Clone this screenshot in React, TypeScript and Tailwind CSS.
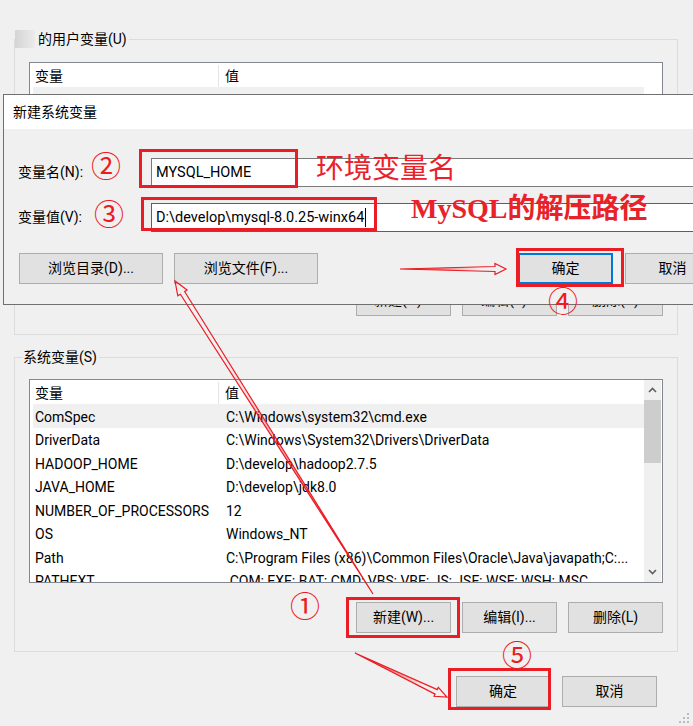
import type { ReactNode } from 'react';

const RED = '#ec1c24';

type Row = [string, string];

// user rows are hidden behind the dialog; only the selected row's edge shows
const userRows: Row[] = [['', '']];

const sysRows: Row[] = [
  ['ComSpec', 'C:\\Windows\\system32\\cmd.exe'],
  ['DriverData', 'C:\\Windows\\System32\\Drivers\\DriverData'],
  ['HADOOP_HOME', 'D:\\develop\\hadoop2.7.5'],
  ['JAVA_HOME', 'D:\\develop\\jdk8.0'],
  ['NUMBER_OF_PROCESSORS', '12'],
  ['OS', 'Windows_NT'],
  ['Path', 'C:\\Program Files (x86)\\Common Files\\Oracle\\Java\\javapath;C:...'],
  ['PATHEXT', '.COM;.EXE;.BAT;.CMD;.VBS;.VBE;.JS;.JSE;.WSF;.WSH;.MSC'],
];

// hollow tapered arrow, like the screenshot tool draws
type Arrow = { x1: number; y1: number; x2: number; y2: number; shaft: number; headW: number; headL: number };

const arrows: Arrow[] = [
  { x1: 373, y1: 594, x2: 175, y2: 281, shaft: 5, headW: 11, headL: 14 },
  { x1: 400, y1: 269, x2: 506, y2: 269, shaft: 5, headW: 11, headL: 11 },
  { x1: 355, y1: 653, x2: 447, y2: 697, shaft: 5, headW: 10, headL: 12 },
];

function arrowPath(a: Arrow) {
  const dx = a.x2 - a.x1;
  const dy = a.y2 - a.y1;
  const len = Math.hypot(dx, dy);
  const ux = dx / len;
  const uy = dy / len;
  const nx = -uy;
  const ny = ux;
  const bx = a.x2 - ux * a.headL;
  const by = a.y2 - uy * a.headL;
  const p = (x: number, y: number) => `${x.toFixed(1)},${y.toFixed(1)}`;
  return [
    `M${p(a.x1, a.y1)}`,
    `L${p(bx + (nx * a.shaft) / 2, by + (ny * a.shaft) / 2)}`,
    `L${p(bx + (nx * a.headW) / 2, by + (ny * a.headW) / 2)}`,
    `L${p(a.x2, a.y2)}`,
    `L${p(bx - (nx * a.headW) / 2, by - (ny * a.headW) / 2)}`,
    `L${p(bx - (nx * a.shaft) / 2, by - (ny * a.shaft) / 2)}`,
    'Z',
  ].join(' ');
}

function Btn({ children, className = '' }: { children: ReactNode; className?: string }) {
  return (
    <div className={`flex h-[31px] shrink-0 items-center justify-center bg-[#e1e1e1] ${className}`}>{children}</div>
  );
}

function Chevron({ down }: { down?: boolean }) {
  return (
    <svg width="9" height="6" viewBox="0 0 9 6">
      <path d={down ? 'M1 1 L4.5 4.5 L8 1' : 'M1 5 L4.5 1.5 L8 5'} fill="none" stroke="#606060" strokeWidth="1.6" />
    </svg>
  );
}

function VarList({ rows, scroll }: { rows: Row[]; scroll: boolean }) {
  return (
    <div className="flex h-[204px] overflow-hidden border border-[#828790] bg-white pl-[3px] pr-px">
      <div className="flex min-w-0 flex-1 flex-col">
        <div className="flex h-[24px] shrink-0 pt-[2px] leading-[22px]">
          <div className="w-[186px] shrink-0 border-r border-[#e5e5e5] pl-[2px]">变量</div>
          <div className="pl-[6px]">值</div>
        </div>
        {rows.map(([name, value], i) => (
          <div
            key={i}
            className={`flex h-[23.5px] shrink-0 whitespace-nowrap pt-[2.5px] leading-[21px] ${i === 0 ? 'bg-[#f0f0f0]' : ''}`}
          >
            <div className="w-[186px] shrink-0 overflow-hidden pl-[2px]">{name}</div>
            <div className="overflow-hidden pl-[7px]">{value}</div>
          </div>
        ))}
      </div>
      {scroll ? (
        <div className="flex w-[17px] shrink-0 flex-col bg-[#f0f0f0]">
          <div className="flex h-[20px] items-center justify-center">
            <Chevron />
          </div>
          <div className="h-[63px] bg-[#cdcdcd]" />
          <div className="flex-1" />
          <div className="flex h-[20px] items-center justify-center">
            <Chevron down />
          </div>
        </div>
      ) : (
        <div className="w-[17px] shrink-0" />
      )}
    </div>
  );
}

function Circled({ ch, x, y }: { ch: string; x: number; y: number }) {
  return (
    <span
      className="absolute flex h-[32px] w-[32px] -translate-x-1/2 -translate-y-1/2 items-center justify-center text-[30px] leading-none text-[#ec1c24]"
      style={{ left: x, top: y }}
    >
      {ch}
    </span>
  );
}

function RedBox({ x, y, w, h }: { x: number; y: number; w: number; h: number }) {
  return <div className="absolute border-[3px] border-[#ec1c24]" style={{ left: x, top: y, width: w, height: h }} />;
}

export default function App() {
  return (
    <div className="relative h-[726px] w-[693px] overflow-hidden bg-[#f0f0f0] font-['Roboto','Noto_Sans_CJK_SC',sans-serif] text-[14px] text-black">
      <div className="pl-[14px] pr-[15px] pt-[30px]">
        {/* user variables */}
        <fieldset className="border border-[#dcdcdc]">
          <legend className="h-[18px] leading-[18px]">
            <span className="flex items-center">
              <span className="h-[18px] w-[20px] bg-gradient-to-r from-[#d4d4d4] to-[#ebebeb]" />
              <span className="pl-[3px] pr-[2px]">的用户变量(U)</span>
            </span>
          </legend>
          <div className="px-[14px] pb-[18px] pt-[14px]">
            <VarList rows={userRows} scroll={false} />
            <div className="mt-[19px] flex justify-end gap-[11px]">
              <Btn className="w-[95px] border border-[#adadad]">新建(N)...</Btn>
              <Btn className="w-[95px] border border-[#adadad]">编辑(E)...</Btn>
              <Btn className="w-[95px] border border-[#adadad]">删除(D)</Btn>
            </div>
          </div>
        </fieldset>

        {/* system variables */}
        <fieldset className="mt-[13px] border border-[#dcdcdc]">
          <legend className="ml-[8px] h-[18px] pr-[2px] leading-[18px]">系统变量(S)</legend>
          <div className="px-[14px] pb-[18px] pt-[13px]">
            <VarList rows={sysRows} scroll />
            <div className="mt-[19px] flex justify-end gap-[11px]">
              <Btn className="w-[95px] border border-[#adadad]">新建(W)...</Btn>
              <Btn className="w-[95px] border border-[#adadad]">编辑(I)...</Btn>
              <Btn className="w-[95px] border border-[#adadad]">删除(L)</Btn>
            </div>
          </div>
        </fieldset>

        <div className="mt-[24px] flex justify-end gap-[12px] pr-[21px]">
          <Btn className="w-[94px] border border-[#adadad]">确定</Btn>
          <Btn className="w-[95px] border border-[#adadad]">取消</Btn>
        </div>
      </div>

      {/* resize grip */}
      <svg className="absolute bottom-[2px] right-[3px]" width="12" height="12" viewBox="0 0 12 12">
        {[
          [9, 1], [9, 5], [5, 5], [9, 9], [5, 9], [1, 9],
        ].map(([x, y]) => (
          <rect key={`${x}-${y}`} x={x} y={y} width="2" height="2" fill="#bcbcbc" />
        ))}
      </svg>

      {/* 新建系统变量 dialog */}
      <div className="absolute left-[3px] top-[94px] h-[211px] w-[740px] border border-[#707070] bg-[#f0f0f0]">
        <div className="flex h-[34px] items-center bg-white pl-[9px]">新建系统变量</div>
        <div className="pt-[29px]">
          <div className="flex items-center">
            <div className="w-[147px] pl-[14px]">变量名(N):</div>
            <div className="flex h-[29px] flex-1 items-center border border-[#7a7a7a] bg-white pl-[4px] text-[14.5px]">
              MYSQL_HOME
            </div>
          </div>
          <div className="mt-[16px] flex items-center">
            <div className="w-[147px] pl-[14px]">变量值(V):</div>
            <div className="flex h-[29px] flex-1 items-center border border-[#0078d7] bg-white pl-[4px] text-[14.5px]">
              <span>D:\develop\mysql-8.0.25-winx64</span>
              <span className="ml-px inline-block h-[19px] w-px bg-black" />
            </div>
          </div>
          <div className="mt-[21px] flex pl-[15px]">
            <Btn className="w-[144px] border border-[#adadad]">浏览目录(D)...</Btn>
            <Btn className="ml-[11px] w-[144px] border border-[#adadad]">浏览文件(F)...</Btn>
            <Btn className="ml-[200px] w-[95px] border-2 border-[#0078d7]">确定</Btn>
            <Btn className="ml-[12px] w-[95px] border border-[#adadad]">取消</Btn>
          </div>
        </div>
      </div>

      {/* annotations */}
      <RedBox x={139} y={149} w={159} h={39} />
      <RedBox x={141} y={197} w={236} h={34} />
      <RedBox x={516} y={248} w={108} h={39} />
      <RedBox x={346} y={597} w={114} h={41} />
      <RedBox x={448} y={668} w={103} h={42} />

      <Circled ch="②" x={106} y={167} />
      <Circled ch="③" x={109} y={215} />
      <Circled ch="④" x={563} y={302} />
      <Circled ch="①" x={305} y={607} />
      <Circled ch="⑤" x={517} y={656} />

      <span className="absolute left-[316px] top-[155px] whitespace-nowrap text-[28px] leading-none text-[#e8222a]">
        环境变量名
      </span>
      <span className="absolute left-[411px] top-[195px] whitespace-nowrap text-[28px] font-bold leading-none text-[#e8222a]">
        <span className="font-['Liberation_Serif',serif]">MySQL</span>
        <span>的解压路径</span>
      </span>

      <svg className="pointer-events-none absolute inset-0" width="693" height="726">
        <defs>
          {arrows.map((a, i) => (
            <linearGradient
              key={i}
              id={`ag${i}`}
              gradientUnits="userSpaceOnUse"
              x1={a.x1}
              y1={a.y1}
              x2={a.x2}
              y2={a.y2}
            >
              <stop offset="0" stopColor={RED} stopOpacity="1" />
              <stop offset="0.75" stopColor={RED} stopOpacity="0" />
            </linearGradient>
          ))}
        </defs>
        {arrows.map((a, i) => (
          <path key={i} d={arrowPath(a)} fill={`url(#ag${i})`} stroke={RED} strokeWidth="1.2" />
        ))}
      </svg>
    </div>
  );
}
